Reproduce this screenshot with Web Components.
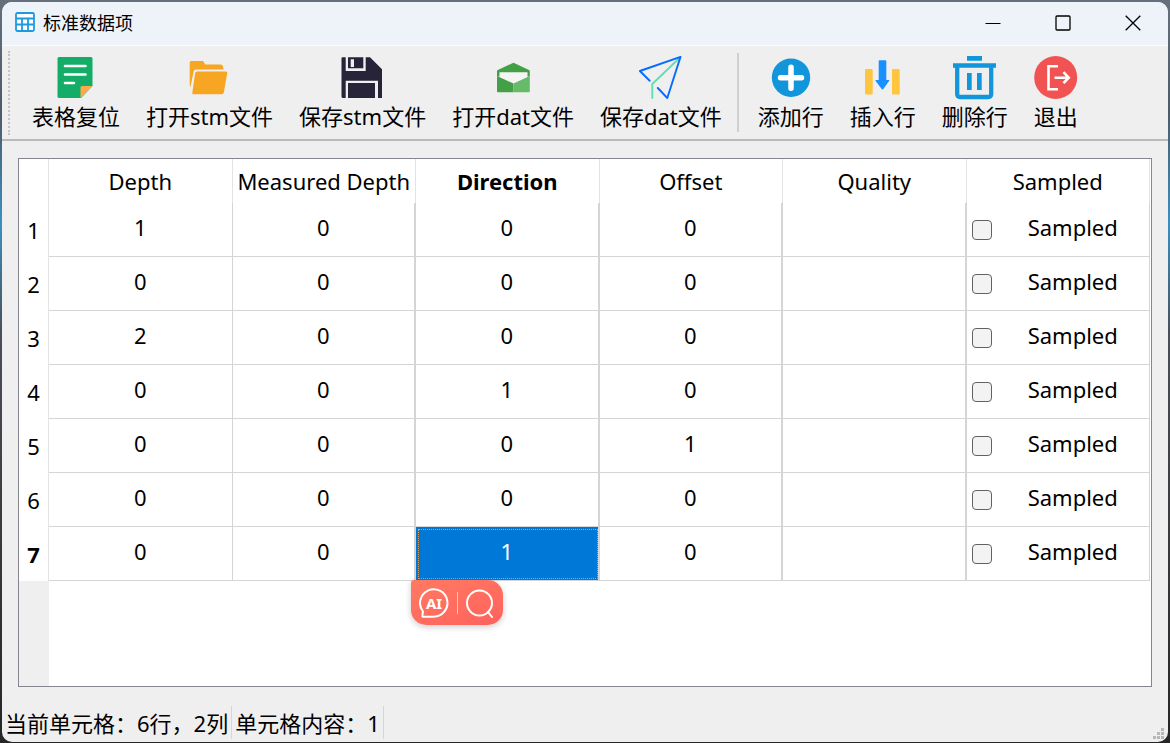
<!DOCTYPE html>
<html lang="zh-CN">
<head>
<meta charset="utf-8">
<title>标准数据项</title>
<style>
html, body { height: 100%; }
body { margin: 0; font-family: "Noto Sans", "Noto Sans CJK SC", sans-serif; font-size: 22px; line-height: 30px; color: #000;
  background: linear-gradient(180deg, #66707c 0, #4d5a68 15%, #3b8fc0 30%, #4a4f58 45%, #3c3c3f 70%, #262626 100%); }
</style>
</head>
<body>
<app-window>
  <title-bar slot="title">标准数据项</title-bar>
  <tool-bar slot="tools">
    <tool-button>
      <svg slot="icon" viewBox="0 0 44 44"><path fill="#14ad67" d="M5 1h32q1.500 0 1.500 1.500V30L27 42H5q-1.500 0-1.500-1.500v-38Q3.500 1 5 1z"/><path fill="#ffa94a" d="M26.500 42V31.500q0-1.500 1.500-1.500h10.500z"/><path stroke="#fff" stroke-width="2.600" stroke-linecap="round" d="M11 10h20.500M11 18.500h20.500M11 27h9"/></svg>
      表格复位</tool-button>
    <tool-button>
      <svg slot="icon" viewBox="0 0 44 44"><path fill="#f6a623" d="M3 5h11q1.500 0 2 1.200L17 8.500h16q1.500 0 2 2l.7 3H8q-2 0-2.400 2L2.500 31q-.8-1-.8-3V6.500Q1.700 5 3 5z"/><path fill="#f6a623" d="M9 15.500h29q1.500 0 1.300 1.500l-3.500 19.500q-.4 1.800-2 1.800H5.500q-1.500 0-1.200-1.500L7.200 17q.2-1.500 1.800-1.500z"/></svg>
      打开stm文件</tool-button>
    <tool-button>
      <svg slot="icon" viewBox="0 0 44 44"><path fill="#272338" d="M1.500 1.300H29l12 12V42H37V24.700H4.700V42H2Q.5 42 .5 40.500V2.300q0-1 1-1z"/><path fill="#efefef" d="M4.700 1h20v14h-20z"/><path fill="#272338" d="M7 1.300h15.300v11H7zM7 27h27v15H7z"/><path fill="#efefef" d="M9.700 3.300H13V11H9.700z"/></svg>
      保存stm文件</tool-button>
    <tool-button>
      <svg slot="icon" viewBox="0 0 44 44"><path fill="#43a047" d="M22.500 6.700 38 14q.8.400.8 1.500v5H6v-5q0-1.100.8-1.500z"/><path fill="#f5f5f5" d="M8.500 16.300h28v9l-14 4-14-4z"/><path fill="#43a047" d="M6 20l16.500 7.500V36.300H7q-1 0-1-1z"/><path fill="#66bb6a" d="M38.800 20l-16.300 7.500V36.300h15.300q1 0 1-1z"/></svg>
      打开dat文件</tool-button>
    <tool-button>
      <svg slot="icon" viewBox="0 0 44 44" fill="none" stroke-width="1.900" stroke-linecap="round" stroke-linejoin="round"><path stroke="#62ddb0" d="M40 2.500 13.300 28v14"/><path stroke="#066bff" d="M10.700 24.700.9 15 41.500.9 28.300 42l-9.500-10"/></svg>
      保存dat文件</tool-button>
    <tool-separator></tool-separator>
    <tool-button>
      <svg slot="icon" viewBox="0 0 44 44"><circle cx="22" cy="21.700" r="19.200" fill="#1296db"/><path stroke="#fff" stroke-width="5.500" stroke-linecap="round" d="M11.500 21.700h21M22 11.200v21"/></svg>
      添加行</tool-button>
    <tool-button>
      <svg slot="icon" viewBox="0 0 44 44"><rect x="4" y="13" width="7.700" height="25.500" rx="1" fill="#ffc53d"/><rect x="31" y="13" width="7.700" height="25.500" rx="1" fill="#ffc53d"/><path fill="#1890ff" d="M18.500 4.300h6q.8 0 .8.800V24h2.400q1 0 .4.900l-5.800 8.200q-.8 1-1.600 0L14.600 24.900q-.5-.9.400-.9h2.700V5.100q0-.8.800-.8z"/></svg>
      插入行</tool-button>
    <tool-button>
      <svg slot="icon" viewBox="0 0 44 44"><path fill="#1296db" d="M14 0h15v4.700H14zM0 7.300h43v4.500H0zM14 17h4.700v17H14zM24 17h4.700v17H24z"/><path fill="none" stroke="#1296db" stroke-width="4.300" d="M4.200 10v28q0 3 3 3h28q3 0 3-3V10"/></svg>
      删除行</tool-button>
    <tool-button>
      <svg slot="icon" viewBox="0 0 44 44"><circle cx="21.700" cy="21.500" r="21.500" fill="#f05351"/><g fill="none" stroke="#fff" stroke-width="2.600"><path d="M24 10.300h-9.500v22.900H24"/><path d="M20.500 21.700H34M29.500 16.200l5.200 5.500-5.200 5.500"/></g></svg>
      退出</tool-button>
  </tool-bar>
  <data-grid></data-grid>
  <status-bar slot="status">
    <status-item>当前单元格：6行，2列</status-item>
    <status-item>单元格内容：1</status-item>
  </status-bar>
</app-window>

<script>
const define = (name, html, init) => customElements.define(name, class extends HTMLElement {
  constructor() {
    super();
    this.attachShadow({ mode: "open" }).innerHTML = html;
    if (init) init(this.shadowRoot);
  }
});

define("app-window", `
<style>
  :host { display: block; height: 100vh; box-sizing: border-box; padding: 2px 2px 1px; }
  section { display: flex; flex-direction: column; height: 100%; background: #efefef; border-radius: 10px; overflow: hidden; }
  main { flex: 1; min-height: 0; display: flex; padding: 17px 16px 18px; }
</style>
<section>
  <slot name="title"></slot>
  <slot name="tools"></slot>
  <main><slot></slot></main>
  <slot name="status"></slot>
</section>`);

define("title-bar", `
<style>
  :host { display: flex; align-items: center; height: 43px; background: #eef3fa; border-bottom: 1px solid #fafcff; font-size: 18px; line-height: 26px; }
  .logo { width: 20px; height: 20px; margin: 0 8px 3px 13px; }
  h1 { flex: 1; margin: 0 0 2px; font: inherit; }
  button { width: 70px; height: 42px; padding: 0 0 2px; border: 0; background: none; display: grid; place-items: center; }
  button svg { width: 16px; height: 16px; fill: none; stroke: #000; stroke-width: 1.300; }
  .thin { stroke-width: 1; }
</style>
<svg class="logo" viewBox="0 0 20 20"><rect x="1" y="1" width="18" height="18" rx="1.500" fill="#fff" stroke="#1c9ae0" stroke-width="1.800"/><path stroke="#1c9ae0" stroke-width="1.800" d="M1 6.500h18M1 12.500h18M7 6v13M13 6v13"/></svg>
<h1><slot></slot></h1>
<button aria-label="最小化"><svg viewBox="0 0 16 16"><path class="thin" d="M.5 8.500h15"/></svg></button>
<button aria-label="最大化"><svg viewBox="0 0 16 16"><rect x="1" y="1" width="14" height="14" rx="1"/></svg></button>
<button aria-label="关闭"><svg viewBox="0 0 16 16"><path d="M.7.700l14.600 14.600M15.300.7.700 15.300"/></svg></button>`);

define("tool-bar", `
<style>
  :host { display: flex; align-items: stretch; height: 93px; border-bottom: 2px solid #b9bab9; }
  .grip { width: 0; margin: 5px 9px 4px 6px; border-left: 2px dotted #c4c4c4; }
</style>
<div class="grip"></div><slot></slot>`);

define("tool-separator", `
<style>:host { display: block; width: 2px; margin: 7px 6px 7px 2px; background: #d0d0d0; }</style>`);

define("tool-button", `
<style>
  :host { display: block; }
  button { height: 100%; padding: 10px 13px 0; border: 0; background: none; color: inherit; font: inherit; white-space: nowrap;
    display: flex; flex-direction: column; align-items: center; gap: 1px; }
  ::slotted(svg) { display: block; width: 44px; height: 44px; }
</style>
<button><slot name="icon"></slot><span><slot></slot></span></button>`);

define("row-check", `
<style>
  :host { display: block; }
  label { display: flex; align-items: center; gap: 5px; padding-left: 5px; }
  input { appearance: none; flex: none; box-sizing: border-box; width: 20px; height: 20px; margin: 6px 0 0; border: 1px solid #626262; border-radius: 4px; background: #f3f3f3; }
  input:checked { background: #0078d7; }
  span { flex: 1; text-align: center; }
</style>
<label><input type="checkbox"><span>Sampled</span></label>`);

define("quick-tools", `
<style>
  :host { display: flex; align-items: center; justify-content: space-between; box-sizing: border-box; width: 92px; height: 45px; padding: 0 8px;
    border-radius: 3px 15px 15px 15px; background: linear-gradient(160deg, #ff7a61, #ff625e); box-shadow: 0 2px 6px #0003; color: #fff; }
  button { position: relative; width: 30px; height: 30px; padding: 0; border: 0; background: none; color: inherit; font: bold 15px/30px "Noto Sans", sans-serif; }
  svg { position: absolute; inset: 0; fill: none; stroke: #fff; stroke-width: 2; stroke-linecap: round; stroke-linejoin: round; }
  i { width: 1px; height: 22px; background: #ffc1b8; }
</style>
<button><svg viewBox="0 0 30 30"><path d="M4 23.500A13.700 13.700 0 1 1 14.500 28.700H4q-1 0-.7-1z"/></svg>AI</button>
<i></i>
<button aria-label="搜索"><svg viewBox="0 0 30 30"><circle cx="14.500" cy="15" r="12.500"/><path d="M23 24 27 29"/></svg></button>`);

define("data-grid", `
<style>
  :host { flex: 1; min-width: 0; box-sizing: border-box; display: flex; flex-direction: column; border: 1px solid #85858d; background: #fff; }
  table { width: calc(100% - 1px); table-layout: fixed; border-collapse: separate; border-spacing: 0; text-align: center; }
  th, td { box-sizing: border-box; padding: 0; font-weight: normal; }
  thead th { height: 44px; border-right: 1px solid #e3e3e3; white-space: nowrap; }
  tbody th { border-right: 1px solid #e3e3e3; }
  tbody th, td { height: 54px; }
  td { position: relative; padding-bottom: 5px; border-right: 2px solid #d5d5d5; border-bottom: 1px solid #d5d5d5; }
  td:nth-child(2), td:last-child { border-right-width: 1px; }
  .current { font-weight: bold; }
  .selected { background: #0078d7; background-clip: padding-box; color: #fff; outline: 1px dotted #d9a066; outline-offset: -3px; }
  quick-tools { position: absolute; left: -5px; top: 100%; }
  .rest { flex: 1; width: 30px; background: #efefef; }
  .index { width: 30px; }
</style>
<table>
  <colgroup><col class="index"><col span="6"></colgroup>
  <thead><tr><th></th></tr></thead>
  <tbody></tbody>
</table>
<div class="rest"></div>`, root => {
  const columns = ["Depth", "Measured Depth", "Direction", "Offset", "Quality", "Sampled"];
  const rows = [[1, 0, 0, 0], [0, 0, 0, 0], [2, 0, 0, 0], [0, 0, 1, 0], [0, 0, 0, 1], [0, 0, 0, 0], [0, 0, 1, 0]];
  const current = { row: 6, column: 2 };
  root.querySelector("thead tr").innerHTML += columns.map((name, c) =>
    `<th scope="col"${c === current.column ? ' class="current"' : ""}>${name}</th>`).join("");
  root.querySelector("tbody").innerHTML = rows.map((values, r) => {
    const cells = values.map((value, c) => r === current.row && c === current.column
      ? `<td class="selected">${value}<quick-tools></quick-tools></td>` : `<td>${value}</td>`).join("");
    return `<tr><th scope="row"${r === current.row ? ' class="current"' : ""}>${r + 1}</th>${cells}<td></td><td><row-check></row-check></td></tr>`;
  }).join("");
});

define("status-bar", `
<style>
  :host { display: flex; align-items: stretch; height: 37px; }
  svg { width: 12px; height: 12px; margin: auto 3px 2px auto; fill: #b8b8b8; }
</style>
<slot></slot>
<svg viewBox="0 0 12 12"><path d="M8 0h3v3H8zM4 4h3v3H4zM8 4h3v3H8zM0 8h3v3H0zM4 8h3v3H4zM8 8h3v3H8z"/></svg>`);

define("status-item", `
<style>:host { display: block; margin: 1px 0 3px; padding: 2px 3px 0; border-right: 1px solid #d6d6d6; white-space: nowrap; }</style>
<slot></slot>`);
</script>
</body>
</html>
